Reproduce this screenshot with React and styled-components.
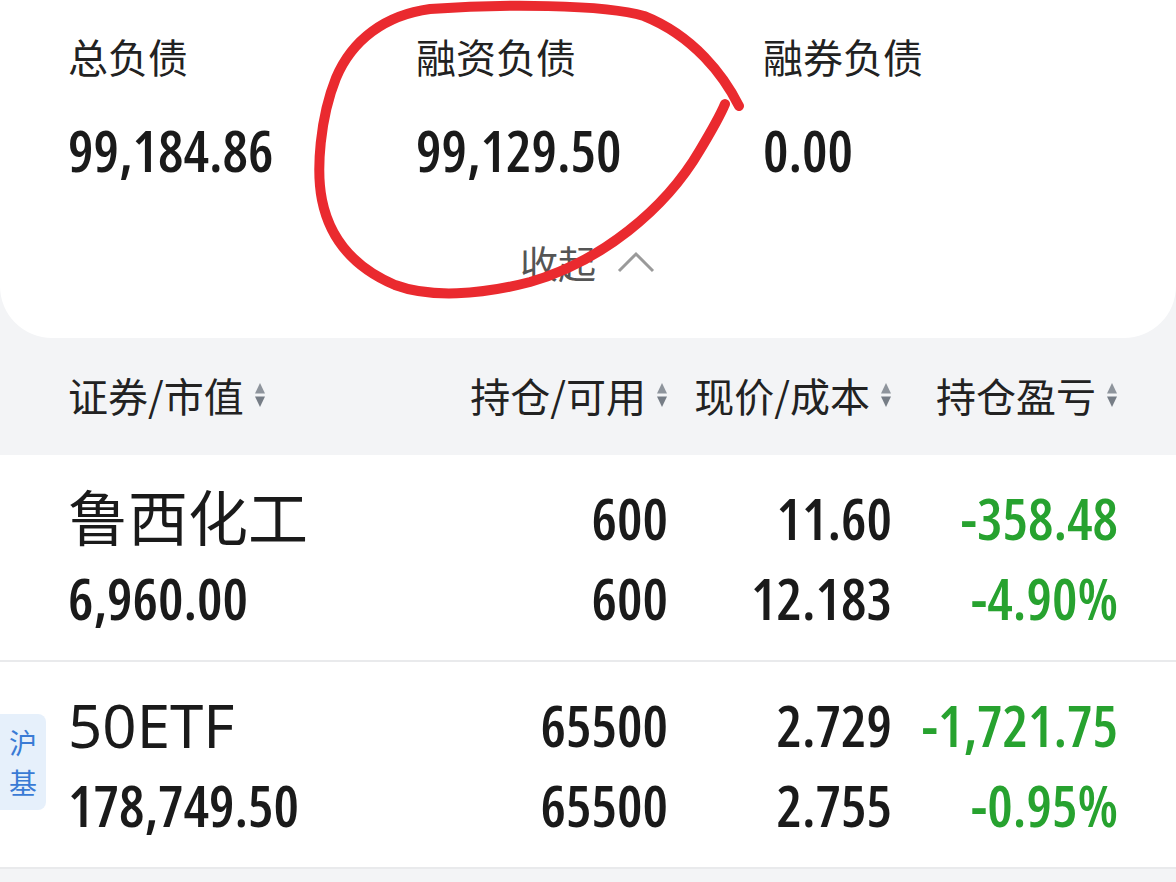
import React from 'react';
import styled, { createGlobalStyle } from 'styled-components';

const GlobalStyle = createGlobalStyle`
  html, body {
    margin: 0;
    padding: 0;
    background: #f3f4f6;
  }
  body {
    font-family: "Noto Sans", "Noto Sans CJK SC", sans-serif;
    color: #1c1c1e;
  }
`;

const NUM_FONT = `"Open Sans", "DejaVu Sans Condensed", sans-serif`;

const Page = styled.div`
  position: relative;
  width: 1176px;
  height: 882px;
  overflow: hidden;
  background: #f3f4f6;
`;

const SummaryCard = styled.section`
  background: #fff;
  border-radius: 0 0 52px 52px;
  padding: 32px 0 0 68px;
  height: 338px;
  box-sizing: border-box;
`;

const StatGrid = styled.div`
  display: grid;
  grid-template-columns: 348px 347px 1fr;
`;

const Stat = styled.div`
  display: flex;
  flex-direction: column;
  gap: 42px;
`;

const StatLabel = styled.div`
  font-family: "Noto Sans CJK SC", sans-serif;
  font-size: 40px;
  line-height: 48px;
  color: #222;
`;

const StatValue = styled.div`
  font-family: ${NUM_FONT};
  font-stretch: 75%;
  font-size: 57px;
  line-height: 56px;
  font-weight: 600;
  color: #1a1a1a;
`;

const Collapse = styled.div`
  display: flex;
  align-items: center;
  justify-content: center;
  gap: 20px;
  margin: 60px 0 0 -68px;
  font-family: "Noto Sans CJK SC", sans-serif;
  font-size: 38px;
  line-height: 48px;
  color: #555;
`;

const HeaderRow = styled.div`
  display: grid;
  grid-template-columns: 1fr 224px 224px 226px;
  align-items: center;
  height: 117px;
  padding: 0 58px 0 68px;
`;

const HeadCell = styled.div`
  display: flex;
  align-items: center;
  justify-content: ${(p) => (p.$left ? 'flex-start' : 'flex-end')};
  gap: 10px;
  margin-top: -3px;
  font-family: "Noto Sans CJK SC", sans-serif;
  font-size: 40px;
  color: #222;
`;

const Row = styled.div`
  position: relative;
  display: grid;
  grid-template-columns: 1fr 224px 224px 226px;
  grid-template-rows: 80px 80px;
  align-content: center;
  height: 207px;
  box-sizing: border-box;
  padding: 0 58px 0 68px;
  background: #fff;
  border-bottom: 2px solid #e9eaec;
`;

const Name = styled.div`
  font-family: "Noto Sans", "Noto Sans CJK SC", sans-serif;
  font-size: 60px;
  line-height: 80px;
  color: #1a1a1a;
`;

const Num = styled.div`
  font-family: ${NUM_FONT};
  font-stretch: 75%;
  font-size: 57px;
  line-height: 80px;
  font-weight: 600;
  text-align: ${(p) => (p.$left ? 'left' : 'right')};
  color: ${(p) => (p.$down ? '#27a22f' : '#1a1a1a')};
`;

const Badge = styled.div`
  position: absolute;
  left: 0;
  top: 52px;
  width: 46px;
  height: 96px;
  border-radius: 0 8px 8px 0;
  background: #e6f0fb;
  color: #3a7bd5;
  font-family: "Noto Sans CJK SC", sans-serif;
  font-size: 28px;
  line-height: 40px;
  display: flex;
  flex-direction: column;
  align-items: center;
  justify-content: center;
`;

const Overlay = styled.svg`
  position: absolute;
  left: 0;
  top: 0;
  pointer-events: none;
`;

function SortIcon() {
  return (
    <svg width="12" height="28" viewBox="0 0 12 28">
      <path d="M1 12.5 L6 2 L11 12.5 Z" fill="#8e949c" />
      <path d="M1 15.5 L6 26 L11 15.5 Z" fill="#767d86" />
    </svg>
  );
}

function ChevronUp() {
  return (
    <svg width="40" height="24" viewBox="0 0 40 24">
      <path d="M3 21 L20 4 L37 21" fill="none" stroke="#9a9a9a" strokeWidth="3" />
    </svg>
  );
}

const stats = [
  { label: '总负债', value: '99,184.86' },
  { label: '融资负债', value: '99,129.50' },
  { label: '融券负债', value: '0.00' },
];

const heads = ['持仓/可用', '现价/成本', '持仓盈亏'];

const positions = [
  {
    name: '鲁西化工',
    value: '6,960.00',
    hold: '600',
    avail: '600',
    price: '11.60',
    cost: '12.183',
    pnl: '-358.48',
    pct: '-4.90%',
  },
  {
    name: '50ETF',
    badge: ['沪', '基'],
    value: '178,749.50',
    hold: '65500',
    avail: '65500',
    price: '2.729',
    cost: '2.755',
    pnl: '-1,721.75',
    pct: '-0.95%',
  },
];

export default function App() {
  return (
    <Page>
      <GlobalStyle />
      <SummaryCard>
        <StatGrid>
          {stats.map((s) => (
            <Stat key={s.label}>
              <StatLabel>{s.label}</StatLabel>
              <StatValue>{s.value}</StatValue>
            </Stat>
          ))}
        </StatGrid>
        <Collapse>
          收起
          <ChevronUp />
        </Collapse>
      </SummaryCard>

      <HeaderRow>
        <HeadCell $left>
          证券/市值
          <SortIcon />
        </HeadCell>
        {heads.map((h) => (
          <HeadCell key={h}>
            {h}
            <SortIcon />
          </HeadCell>
        ))}
      </HeaderRow>

      {positions.map((p) => (
        <Row key={p.name}>
          {p.badge && (
            <Badge>
              {p.badge.map((c) => (
                <span key={c}>{c}</span>
              ))}
            </Badge>
          )}
          <Name>{p.name}</Name>
          <Num>{p.hold}</Num>
          <Num>{p.price}</Num>
          <Num $down>{p.pnl}</Num>
          <Num $left>{p.value}</Num>
          <Num>{p.avail}</Num>
          <Num>{p.cost}</Num>
          <Num $down>{p.pct}</Num>
        </Row>
      ))}

      <Overlay width="1176" height="882" viewBox="0 0 1176 882">
        <path
          d="M739 106 C724 76 694 36 644 16 C604 4 500 4 430 9 C385 15 352 40 336 78 C320 118 316 170 322 200 C330 240 355 268 395 285 C430 298 480 295 530 282 C600 262 665 210 700 150 C712 130 720 116 725 104"
          fill="none"
          stroke="#ea2a2f"
          strokeWidth="10"
          strokeLinecap="round"
        />
      </Overlay>
    </Page>
  );
}
